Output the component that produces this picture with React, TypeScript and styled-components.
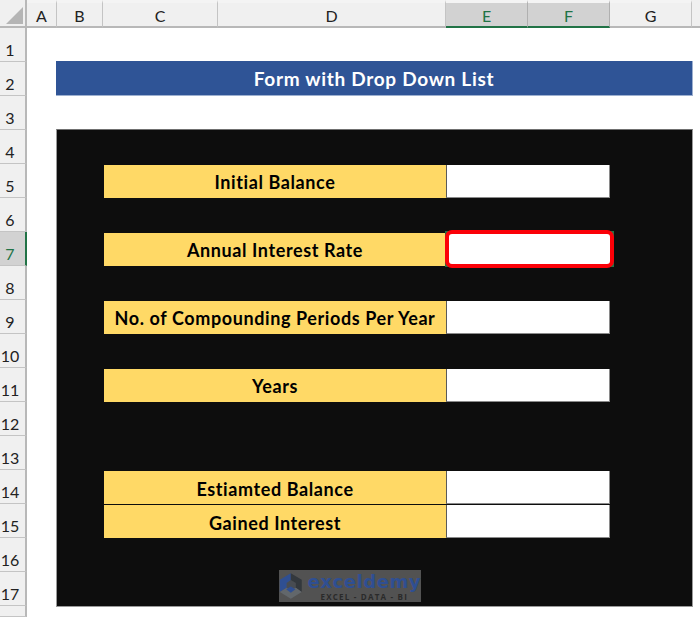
import { createGlobalStyle, styled } from "styled-components";

const GlobalStyle = createGlobalStyle`
  html, body {
    margin: 0;
    padding: 0;
    background: #ffffff;
    overflow: hidden;
  }
`;

const COLUMNS = ["A", "B", "C", "D", "E", "F", "G"];
const ROWS = Array.from({ length: 18 }, (_, i) => i + 1);
const SELECTED_COLUMNS = ["E", "F"];

const Sheet = styled.div`
  width: 700px;
  height: 617px;
  overflow: hidden;
  display: grid;
  grid-template-columns: 27px 30px 46px 115px 228px 82px 82px 82px 8px;
  grid-template-rows: 28px repeat(17, 34px) 1fr;
  font-family: Lato, "Open Sans", sans-serif;
  background: #ffffff;
`;

const Corner = styled.div`
  grid-column: 1;
  grid-row: 1;
  background: #f0f0f0;
  border-right: 2px solid #b8b8b8;
  border-bottom: 2px solid #b8b8b8;
  box-sizing: border-box;
  position: relative;
  &::after {
    content: "";
    position: absolute;
    right: 2px;
    bottom: 2px;
    border-style: solid;
    border-width: 0 0 17px 17px;
    border-color: transparent transparent #b5b5b5 transparent;
  }
`;

const ColHead = styled.div<{ $active?: boolean; $col: number }>`
  grid-column: ${(p) => p.$col};
  grid-row: 1;
  box-sizing: border-box;
  padding-top: 2px;
  display: flex;
  justify-content: center;
  align-items: center;
  font-size: 16px;
  color: ${(p) => (p.$active ? "#217346" : "#222222")};
  background: ${(p) => (p.$active ? "#d2d2d2" : "#f0f0f0")};
  border-top: 3px solid #f4f4f4;
  border-right: 1px solid ${(p) => (p.$active ? "#b0b0b0" : "#c4c4c4")};
  border-bottom: 2px solid ${(p) => (p.$active ? "#217346" : "#b8b8b8")};
`;

const HeadFiller = styled.div`
  grid-column: 9;
  grid-row: 1;
  background: #f0f0f0;
  border-bottom: 2px solid #b8b8b8;
`;

const RowHead = styled.div<{ $active?: boolean; $row: number }>`
  grid-column: 1;
  grid-row: ${(p) => p.$row};
  box-sizing: border-box;
  display: flex;
  justify-content: center;
  align-items: center;
  padding: 9px 5px 0 0;
  font-size: 16px;
  color: ${(p) => (p.$active ? "#217346" : "#222222")};
  background: ${(p) => (p.$active ? "#d2d2d2" : "#f0f0f0")};
  border-bottom: 1px solid #c4c4c4;
  border-right: 2px solid ${(p) => (p.$active ? "#217346" : "#b8b8b8")};
`;

const Banner = styled.div`
  grid-column: 3 / 9;
  grid-row: 3;
  margin: -1px -1px 0 -1px;
  display: flex;
  justify-content: center;
  align-items: center;
  background: #2f5496;
  border-right: 1px solid #9db0d0;
  border-bottom: 1px solid #9db0d0;
  box-sizing: border-box;
  color: #ffffff;
  font-size: 19px;
  font-weight: 700;
  letter-spacing: 0.7px;
`;

const Panel = styled.div`
  grid-column: 3 / 9;
  grid-row: 5 / 19;
  margin: -1px -1px 0 -1px;
  height: 478px;
  background: #0d0d0d;
  border: 1px solid #9a9a9a;
  border-top-color: #707070;
  box-sizing: border-box;
  position: relative;
`;

const Label = styled.div<{ $row: number; $low?: boolean }>`
  grid-column: 4 / 6;
  grid-row: ${(p) => p.$row};
  align-self: center;
  margin-left: 1px;
  height: 33px;
  box-sizing: border-box;
  padding-top: ${(p) => (p.$low ? 3 : 1)}px;
  display: flex;
  justify-content: center;
  align-items: center;
  background: #ffd966;
  color: #000000;
  font-size: 18px;
  font-weight: 700;
  letter-spacing: 0.6px;
  z-index: 1;
`;

const Field = styled.div<{ $row: number }>`
  grid-column: 6 / 8;
  grid-row: ${(p) => p.$row};
  align-self: center;
  height: 33px;
  box-sizing: border-box;
  background: #ffffff;
  border-left: 1px solid #5a5a5a;
  border-right: 1px solid #8a8a8a;
  border-bottom: 1px solid #8a8a8a;
  z-index: 1;
`;

const ActiveCell = styled.div<{ $row: number }>`
  grid-column: 6 / 8;
  grid-row: ${(p) => p.$row};
  align-self: center;
  justify-self: start;
  margin-left: -1px;
  width: 169px;
  height: 36px;
  background: #217346;
  z-index: 1;
`;

const Selection = styled.div<{ $row: number }>`
  grid-column: 6 / 8;
  grid-row: ${(p) => p.$row};
  align-self: center;
  justify-self: start;
  margin-left: -1px;
  width: 169px;
  height: 38px;
  box-sizing: border-box;
  border: 4px solid #fb0007;
  border-radius: 7px;
  background: #ffffff;
  z-index: 2;
`;

const Watermark = styled.div`
  position: absolute;
  left: 222px;
  top: 440px;
  width: 142px;
  height: 32px;
  display: flex;
  align-items: center;
  gap: 5px;
  background: #525252;
`;

const WatermarkText = styled.div`
  display: flex;
  flex-direction: column;
  align-items: center;
`;

const WatermarkName = styled.span`
  font-family: "DejaVu Sans", sans-serif;
  font-size: 18px;
  font-weight: 700;
  color: #2f4f92;
  letter-spacing: 0.55px;
  line-height: 21px;
`;

const WatermarkTag = styled.span`
  font-family: "Open Sans", sans-serif;
  font-size: 8px;
  font-weight: 700;
  color: #2a2a2a;
  letter-spacing: 1.2px;
  line-height: 9px;
`;

const CubeLogo = () => (
  <svg width="28" height="32" viewBox="0 0 28 32">
    <path d="M14 9 L20 12.5 V18 L14 21 L9 18 V12.5 Z" fill="#484c52" />
    <path d="M14 1 L1 8.5 V23 L9 18 V12.5 L14 9 Z" fill="#2f4f92" />
    <path d="M14 1 L27 8.5 V23 L20 18 V12.5 L14 9 Z" fill="#33383d" />
    <path d="M1 23 L14 31 L27 23 L20 18 L14 21 L9 18 Z" fill="#62676b" />
    <path d="M14 16.5 L19.5 20 L14 24 L8.5 20 Z" fill="#2f4f92" />
  </svg>
);

const FORM_ROWS = [
  { row: 5, label: "Initial Balance" },
  { row: 7, label: "Annual Interest Rate", selected: true },
  { row: 9, label: "No. of Compounding Periods Per Year" },
  { row: 11, label: "Years" },
  { row: 14, label: "Estiamted Balance", low: true },
  { row: 15, label: "Gained Interest", low: true },
];

export default function App() {
  return (
    <>
      <GlobalStyle />
      <Sheet>
        <Corner />
        {COLUMNS.map((c, i) => (
          <ColHead key={c} $col={i + 2} $active={SELECTED_COLUMNS.includes(c)}>
            {c}
          </ColHead>
        ))}
        <HeadFiller />
        {ROWS.map((r) => (
          <RowHead key={r} $row={r + 1} $active={r === 7}>
            {r < 18 ? r : ""}
          </RowHead>
        ))}
        <Banner>Form with Drop Down List</Banner>
        <Panel>
          <Watermark>
            <CubeLogo />
            <WatermarkText>
              <WatermarkName>exceldemy</WatermarkName>
              <WatermarkTag>EXCEL - DATA - BI</WatermarkTag>
            </WatermarkText>
          </Watermark>
        </Panel>
        {FORM_ROWS.map((f) => (
          <Label key={f.row} $row={f.row + 1} $low={f.low}>
            {f.label}
          </Label>
        ))}
        {FORM_ROWS.map((f) =>
          f.selected ? (
            <ActiveCell key={`active-${f.row}`} $row={f.row + 1} />
          ) : (
            <Field key={f.row} $row={f.row + 1} />
          )
        )}
        {FORM_ROWS.filter((f) => f.selected).map((f) => (
          <Selection key={f.row} $row={f.row + 1} />
        ))}
      </Sheet>
    </>
  );
}
